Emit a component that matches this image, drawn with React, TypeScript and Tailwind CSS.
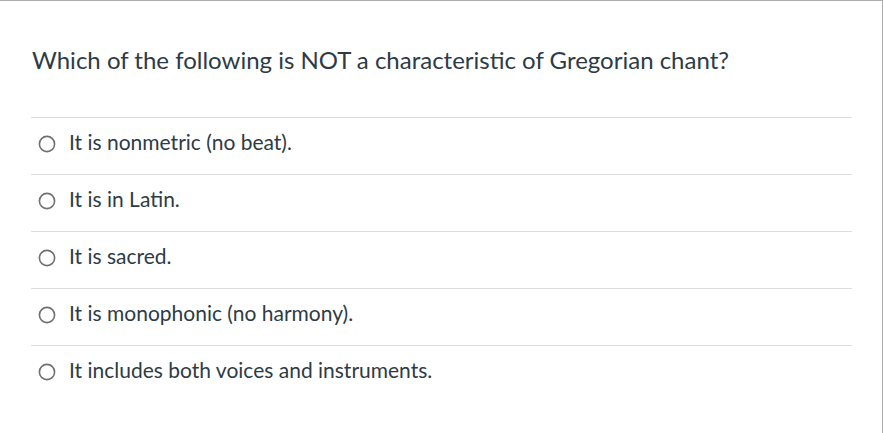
import React from "react";

const options = [
  "It is nonmetric (no beat).",
  "It is in Latin.",
  "It is sacred.",
  "It is monophonic (no harmony).",
  "It includes both voices and instruments.",
];

export default function App() {
  return (
    <div
      className="w-[883px] h-[433px] bg-white overflow-hidden"
      style={{ fontFamily: "Lato, 'Noto Sans', sans-serif" }}
    >
      <div className="w-[883px] h-[433px] border-t border-r border-[#acacac] pl-[31px] pr-[30px]">
        <div className="pt-[41px] h-[116px]">
          <p className="text-[24px] leading-[36px] text-[#2d3b45] pl-[1px]">
            Which of the following is NOT a characteristic of Gregorian chant?
          </p>
        </div>
        <div className="flex flex-col">
          {options.map((o) => (
            <label
              key={o}
              className="flex items-start h-[57px] border-t border-[#dddddd] pt-[10px]"
            >
              <svg
                className="mt-[7px] ml-[7px] w-[18px] h-[18px] shrink-0"
                viewBox="0 0 18 18"
              >
                <circle cx="9" cy="9" r="7.6" fill="white" stroke="#707070" strokeWidth="1.6" />
              </svg>
              <span className="ml-[13px] text-[21px] leading-[28px] text-[#2d3b45]">
                {o}
              </span>
            </label>
          ))}
        </div>
      </div>
    </div>
  );
}
